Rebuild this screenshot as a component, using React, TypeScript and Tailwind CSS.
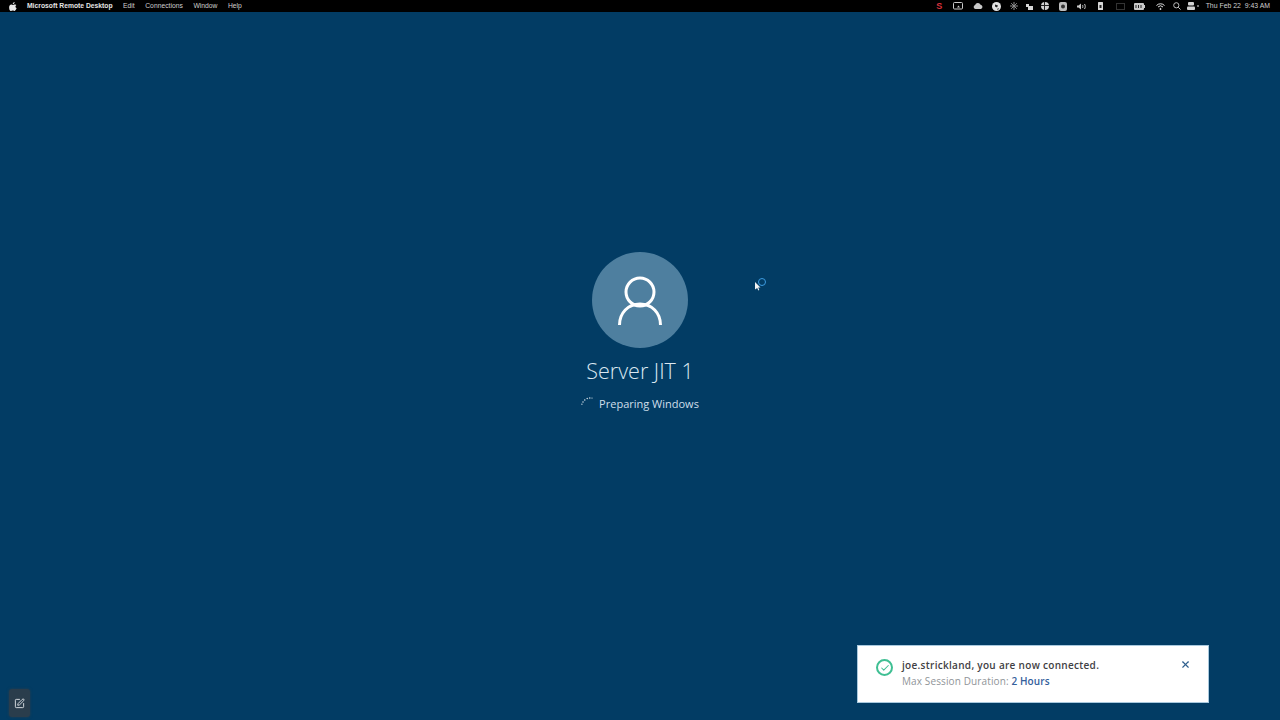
import { Check, X, SquarePen } from "lucide-react";

const menus = ["Edit", "Connections", "Window", "Help"];

function AppleLogo() {
  return (
    <svg width="8" height="9" viewBox="0 0 16 18" fill="#e8e8e8">
      <path d="M11.2 0c.1 1.2-.3 2.2-1 3-.7.8-1.7 1.3-2.7 1.2-.1-1.1.4-2.2 1-2.9C9.200.6 10.300.1 11.200 0zM14.700 6.100c-1.100.7-1.800 1.700-1.800 3 0 1.500.9 2.700 2.300 3.300-.4 1.100-.9 2.200-1.600 3.100-.9 1.300-1.800 2.500-3.100 2.500-1.300 0-1.700-.8-3.200-.8s-2 .8-3.200.8c-1.300 0-2.300-1.300-3.200-2.700C.4 13.400-.4 9.700 1.200 7.200 2 5.900 3.300 5 4.800 5c1.200 0 2.300.8 3 .8.700 0 2-.9 3.400-.8.600 0 2.300.2 3.500 1.100z" />
    </svg>
  );
}

// tiny menu bar extras, blurred in the reference so they are only rough shapes
function TrayIcons() {
  return (
    <div className="flex items-center text-[#c9c9c9]">
      <span className="w-[7px] text-center text-[9px] font-bold leading-none text-[#d8323c]">S</span>
      <svg className="ml-[10px]" width="10" height="8" viewBox="0 0 10 8" fill="none" stroke="currentColor">
        <rect x="0.5" y="0.5" width="9" height="6.500" rx="1" />
        <path d="M4 5.500l1.500-2 1.500 2z" fill="currentColor" stroke="none" />
      </svg>
      <svg className="ml-[10px]" width="10" height="6" viewBox="0 0 10 6" fill="currentColor">
        <path d="M2.500 6a2 2 0 0 1-.4-3.900A3 3 0 0 1 7.600 1.700 2.200 2.200 0 0 1 7.800 6z" />
      </svg>
      <svg className="ml-[9px]" width="9" height="9" viewBox="0 0 9 9">
        <circle cx="4.500" cy="4.500" r="4.500" fill="#e2e2e2" />
        <path d="M3 2.500l3 1-1 2-2-1zM6 6l1 1-2 1z" fill="#222" />
      </svg>
      <svg className="ml-[9px]" width="8" height="8" viewBox="0 0 8 8" stroke="#8c8c8c" strokeWidth="1">
        <path d="M4 0v8M0 4h8M1.200 1.200l5.600 5.600M6.800 1.200L1.200 6.800" />
      </svg>
      <svg className="ml-[8px]" width="7" height="7" viewBox="0 0 7 7" fill="#d6d6d6">
        <path d="M0 1h3v2h4v4H2V4H0z" />
      </svg>
      <svg className="ml-[8px]" width="8" height="8" viewBox="0 0 8 8">
        <circle cx="4" cy="4" r="4" fill="#d2d2d2" />
        <path d="M3.500 0v8M0 3.500h8" stroke="#222" />
      </svg>
      <svg className="ml-[10px]" width="8" height="9" viewBox="0 0 8 9">
        <rect width="8" height="9" rx="2" fill="#bdbdbd" />
        <circle cx="4" cy="4.500" r="2" fill="#333" />
      </svg>
      <svg className="ml-[10px]" width="10" height="7" viewBox="0 0 10 7" fill="none" stroke="#c9c9c9">
        <path d="M0 2.500h1.500L4 .5v6L1.500 4.500H0z" fill="#c9c9c9" stroke="none" />
        <path d="M5.500 2c.5 1 .5 2 0 3M7.500 1c1 1.500 1 3.500 0 5" />
      </svg>
      <svg className="ml-[11px]" width="5" height="8" viewBox="0 0 5 8">
        <rect width="5" height="8" rx="0.5" fill="#d6d6d6" />
        <rect x="1.500" y="3" width="2" height="3" fill="#222" />
      </svg>
      <svg className="ml-[13px]" width="9" height="7" viewBox="0 0 9 7" fill="none" stroke="#333">
        <rect x="0.500" y="0.500" width="8" height="6" />
      </svg>
      <svg className="ml-[9px]" width="11" height="7" viewBox="0 0 11 7">
        <rect width="10" height="7" rx="1" fill="#c9c9c9" />
        <rect x="10" y="2" width="1" height="3" fill="#c9c9c9" />
        <path d="M2 2v3M4.500 2v3M7 2v3" stroke="#222" />
      </svg>
      <svg className="ml-[11px]" width="9" height="7" viewBox="0 0 9 7" fill="none" stroke="#e2e2e2">
        <path d="M.5 2.500a5.500 5.500 0 0 1 8 0M2 4a3.500 3.500 0 0 1 5 0" />
        <circle cx="4.500" cy="6" r="0.600" fill="#e2e2e2" />
      </svg>
      <svg className="ml-[8px]" width="8" height="8" viewBox="0 0 8 8" fill="none" stroke="#bdbdbd">
        <circle cx="3.300" cy="3.300" r="2.600" />
        <path d="M5.200 5.200L7.600 7.600" />
      </svg>
      <svg className="ml-[6px]" width="8" height="8" viewBox="0 0 8 8">
        <rect x="1" width="6" height="3.500" rx="1" fill="#d2d2d2" />
        <rect y="4.500" width="8" height="3.500" rx="1" fill="#d2d2d2" />
      </svg>
      <span className="ml-[2px] h-[2px] w-[2px] rounded-full bg-[#9a9a9a]" />
    </div>
  );
}

function Spinner() {
  return (
    <svg width="12" height="8" viewBox="0 0 12 8" fill="#e8eff4">
      <circle cx="0.900" cy="7.200" r="0.600" />
      <circle cx="2" cy="5" r="0.700" />
      <circle cx="3.800" cy="3" r="0.700" />
      <circle cx="6.200" cy="1.500" r="0.700" />
      <circle cx="8.800" cy="1" r="0.700" />
      <circle cx="11" cy="1" r="0.600" />
    </svg>
  );
}

export default function App() {
  return (
    <div className="flex h-screen w-full flex-col overflow-hidden bg-[#023c64] font-['Open_Sans',sans-serif]">
      {/* mac menu bar */}
      <header className="flex h-[12px] shrink-0 items-center justify-between bg-black pl-[9px] pr-[10px] font-['Liberation_Sans',sans-serif] text-[6.75px] leading-none text-[#cfcfcf]">
        <div className="flex items-center">
          <AppleLogo />
          <span className="ml-[10px] font-bold text-[#e6e6e6]">Microsoft Remote Desktop</span>
          <div className="ml-[10.500px] flex gap-[10.600px]">
            {menus.map((m) => (
              <span key={m}>{m}</span>
            ))}
          </div>
        </div>
        <div className="flex items-center">
          <TrayIcons />
          <span className="ml-[7px] text-[6.9px]">Thu Feb 22&nbsp;&nbsp;9:43 AM</span>
        </div>
      </header>

      <main className="relative flex flex-1 flex-col items-center pt-[240px]">
        {/* user tile */}
        <div className="flex h-[96px] w-[96px] items-center justify-center rounded-full bg-[#4e7f9f]">
          <svg width="46" height="50" viewBox="0 0 46 50" fill="none" stroke="#fff" strokeWidth="3">
            <circle cx="23" cy="17" r="14" />
            <path d="M2.500 50C2.500 38 11 29 23 29s20.500 9 20.500 21" />
          </svg>
        </div>
        <h1 className="mt-[8px] text-[21.5px] font-light leading-[30px] text-[#dbe8f1]">Server JIT 1</h1>
        <div className="mt-[10px] flex items-center">
          <span className="-mt-[7px]">
            <Spinner />
          </span>
          <span className="ml-[6px] text-[11px] leading-[16px] text-[#cfdfea]">Preparing Windows</span>
        </div>

        {/* remote pointer with busy ring */}
        <div className="absolute left-[755px] top-[267px] h-[12px] w-[11px]">
          <svg className="absolute left-0 top-[3px]" width="6" height="9" viewBox="0 0 6 9" fill="#f2f2f2">
            <path d="M0 0l5.500 5.500H3.200l1.100 2.600-1 .4L2.200 6 0 7.500z" />
          </svg>
          <span className="absolute left-[3px] top-[-1px] h-[8px] w-[8px] rounded-full border-[1.500px] border-[#3d9be0]" />
        </div>

        {/* bottom left launcher */}
        <button className="absolute bottom-[3px] left-[9px] flex h-[28px] w-[21px] items-center justify-center rounded-[3px] bg-[#2a3d4c] shadow-[0_0_3px_#2a3d4c]">
          <SquarePen className="h-[11px] w-[11px] text-[#dfe4e8]" strokeWidth={2} />
        </button>

        {/* connected toast */}
        <div className="absolute bottom-[17px] left-[857px] flex h-[58px] w-[352px] items-start border border-[#a9c9de] bg-white pl-[18px] pt-[12px] pr-[17px]">
          <span className="mt-[1px] flex h-[17px] w-[17px] items-center justify-center rounded-full border-2 border-[#3fbf93]">
            <Check className="h-[10px] w-[10px] text-[#3fbf93]" strokeWidth={2.5} />
          </span>
          <div className="ml-[9px] flex-1">
            <p className="text-[10px] font-semibold leading-[14px] tracking-[0.3px] text-[#3f4144]">joe.strickland, you are now connected.</p>
            <p className="mt-[2px] text-[10px] leading-[14px] tracking-[0.12px] text-[#8f9498]">
              Max Session Duration: <span className="font-semibold text-[#34609c]">2 Hours</span>
            </p>
          </div>
          <X className="mt-[1px] h-[11px] w-[11px] text-[#2f5f8e]" strokeWidth={2.5} />
        </div>
      </main>
    </div>
  );
}
